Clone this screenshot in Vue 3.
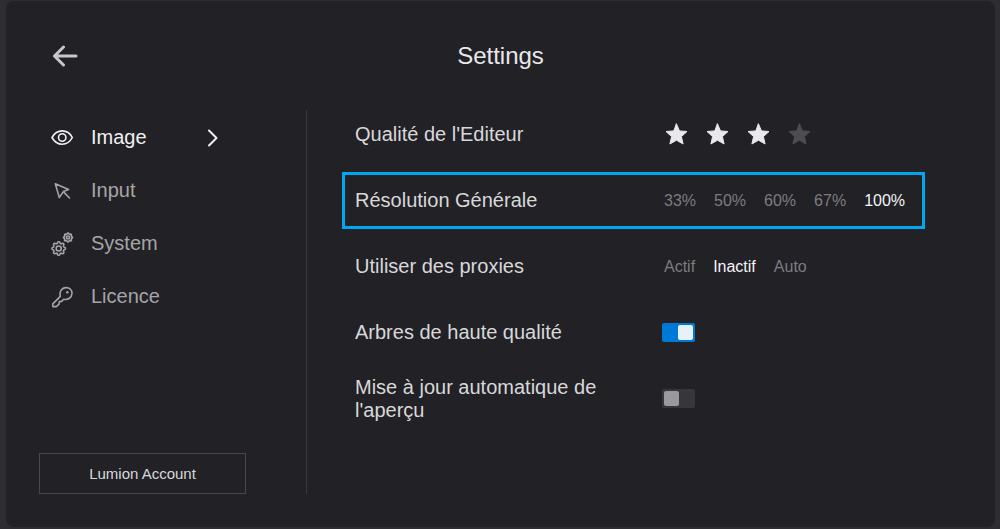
<script setup>
import { ref } from 'vue'

const sections = ['Image', 'Input', 'System', 'Licence']
const section = ref('Image')
const quality = ref(3)
const resolution = ref('100%')
const proxies = ref('Inactif')
const trees = ref(true)
const preview = ref(false)
const resolutions = ['33%', '50%', '60%', '67%', '100%']
const proxyModes = ['Actif', 'Inactif', 'Auto']

// Scalloped outline of a cog with eight rounded teeth.
function cog(cx, cy, r, depth) {
  const points = []
  for (let i = 0; i < 64; i++) {
    const a = (i / 64) * Math.PI * 2
    const d = r + depth * Math.tanh(2 * Math.cos(a * 8))
    points.push(`${(cx + d * Math.cos(a)).toFixed(2)} ${(cy + d * Math.sin(a)).toFixed(2)}`)
  }
  return `M${points.join('L')}Z`
}
const bigCog = cog(8.7, 16.5, 6, 0.8)
const smallCog = cog(18, 5.5, 4, 0.5)
</script>

<template>
  <main class="panel">
    <header class="header">
      <button class="back" type="button" aria-label="Back">
        <svg width="26" height="22" viewBox="0 0 26 22"><path d="M11.500 2 2.500 11l9 9M2.500 11h21.500" /></svg>
      </button>
      <h1>Settings</h1>
    </header>

    <div class="body">
      <aside class="sidebar">
        <nav>
          <button
            v-for="name in sections"
            :key="name"
            type="button"
            class="nav-item"
            :class="{ active: section === name }"
            @click="section = name"
          >
            <svg v-if="name === 'Image'" class="icon" width="24" height="24" viewBox="0 0 24 24">
              <path d="M2 11.500C4.500 7 8 4.900 12.200 4.900S20 7 22.300 11.500C20 16 16.500 18.200 12.200 18.200S4.500 16 2 11.500Z" />
              <circle cx="12.200" cy="11.500" r="3.700" />
            </svg>
            <svg v-else-if="name === 'Input'" class="icon" width="24" height="24" viewBox="0 0 24 24">
              <path d="M19.500 19 13.300 12.600 18.600 10.400 5.300 4.800 9.300 18.600 13.300 12.600" />
            </svg>
            <svg v-else-if="name === 'System'" class="icon" width="24" height="24" viewBox="0 0 24 24">
              <path :d="bigCog" />
              <circle cx="8.700" cy="16.500" r="2.500" />
              <path :d="smallCog" />
              <circle cx="18" cy="5.500" r="1.500" />
            </svg>
            <svg v-else class="icon" width="24" height="24" viewBox="0 0 24 24">
              <path d="M10.300 11.400C8.800 6.800 11.700 2.800 15.700 2.600 19.800 2.400 22.300 5.200 22 8.500 21.700 12.500 18.100 15.300 13.800 14.200L11.600 16.400 9.300 16.600 9 19.200 6.300 21.600H2.800V18.900Z" />
              <circle cx="17.300" cy="7.200" r="1.200" class="dot" />
            </svg>
            <span>{{ name }}</span>
            <svg v-if="section === name" class="chevron" width="12" height="18" viewBox="0 0 12 18">
              <path d="m3 1.500 7.500 7.500L3 16.500" />
            </svg>
          </button>
        </nav>
        <button class="account" type="button">Lumion Account</button>
      </aside>

      <section class="settings">
        <div class="row" role="radiogroup" aria-labelledby="quality-label">
          <span id="quality-label" class="label">Qualité de l'Editeur</span>
          <div class="stars">
            <label v-for="n in 4" :key="n" class="star" :class="{ on: n <= quality }">
              <input v-model="quality" type="radio" name="quality" :value="n" :aria-label="String(n)" />
              <svg width="23" height="22" viewBox="0 0 23 22">
                <path d="M11.500 1 14.500 7.900 22 8.500 16.400 13.600 18.100 21 11.500 17.200 4.900 21 6.600 13.600 1 8.500 8.500 7.900Z" />
              </svg>
            </label>
          </div>
        </div>

        <div class="row highlighted" role="radiogroup" aria-labelledby="resolution-label">
          <span id="resolution-label" class="label">Résolution Générale</span>
          <div class="options">
            <label v-for="r in resolutions" :key="r" :class="{ on: resolution === r }">
              <input v-model="resolution" type="radio" name="resolution" :value="r" />{{ r }}
            </label>
          </div>
        </div>

        <div class="row" role="radiogroup" aria-labelledby="proxies-label">
          <span id="proxies-label" class="label">Utiliser des proxies</span>
          <div class="options">
            <label v-for="p in proxyModes" :key="p" :class="{ on: proxies === p }">
              <input v-model="proxies" type="radio" name="proxies" :value="p" />{{ p }}
            </label>
          </div>
        </div>

        <div class="row">
          <label class="label" for="trees">Arbres de haute qualité</label>
          <input id="trees" v-model="trees" class="toggle" type="checkbox" />
        </div>

        <div class="row">
          <label class="label" for="preview">Mise à jour automatique de l'aperçu</label>
          <input id="preview" v-model="preview" class="toggle" type="checkbox" />
        </div>
      </section>
    </div>
  </main>
</template>

<style>
body {
  background: #2d2d32;
}
</style>

<style scoped>
* {
  box-sizing: border-box;
}
.panel {
  display: flex;
  flex-direction: column;
  min-height: calc(100vh - 2px);
  margin: 0 5px 0 6px;
  border-radius: 8px;
  background: #222126;
  color: #d8d8da;
  font-family: "Liberation Sans", Arial, sans-serif;
  font-size: 20px;
  line-height: 23px;
  border-top: 1px solid #2d2d32;
}
button {
  font: inherit;
  color: inherit;
  background: none;
  border: 0;
  padding: 0;
  cursor: pointer;
}
svg {
  display: block;
  fill: none;
  stroke: currentColor;
  stroke-linecap: round;
  stroke-linejoin: round;
}
.header {
  display: grid;
  grid-template-columns: 1fr auto 1fr;
  align-items: center;
  height: 109px;
  padding: 0 46px;
}
.back {
  justify-self: start;
  color: #c8c8cc;
  stroke-width: 3px;
}
h1 {
  margin: 0;
  font-size: 24px;
  font-weight: 400;
  line-height: 28px;
  color: #e8e8ea;
}
.body {
  flex: 1;
  display: flex;
  padding-bottom: 33px;
}
.sidebar {
  display: flex;
  flex-direction: column;
  justify-content: space-between;
  width: 301px;
  padding: 0 60px 0 33px;
  border-right: 1px solid #38383d;
}
.nav-item {
  display: flex;
  align-items: center;
  width: 100%;
  height: 53px;
  padding: 0 28px 0 11px;
  color: #a5a5a9;
}
.nav-item.active {
  color: #f0f0f2;
}
nav {
  padding-top: 1px;
}
.icon {
  margin-right: 17px;
  stroke-width: 1.6px;
}
.dot {
  fill: currentColor;
  stroke: none;
}
.chevron {
  margin-left: auto;
  stroke-width: 2px;
}
.account {
  height: 41px;
  border: 1px solid #48484c;
  font-size: 15px;
}
.settings {
  flex: 1;
  display: flex;
  flex-direction: column;
  gap: 9px;
  margin-top: -4px;
  padding: 0 70px 0 35px;
}
.row {
  display: flex;
  align-items: center;
  height: 57px;
  padding-left: 10px;
  border: 3px solid transparent;
}
.row.highlighted {
  border-color: #00a8f3;
}
.label {
  width: 250px;
  margin-right: 57px;
}
.options {
  display: flex;
  gap: 18px;
  margin-left: 2px;
  font-size: 16px;
  color: #7c7c80;
}
.options .on {
  color: #f4f4f6;
}
label {
  position: relative;
  cursor: pointer;
}
label input {
  position: absolute;
  inset: 0;
  margin: 0;
  opacity: 0;
}
.stars {
  display: flex;
  gap: 18px;
  margin-left: 3px;
  padding-bottom: 2px;
}
.star {
  color: #4c4c51;
}
.star.on {
  color: #e9e8ed;
}
.star svg {
  fill: currentColor;
}
.toggle {
  appearance: none;
  display: flex;
  align-items: center;
  width: 33px;
  height: 19px;
  margin: 0;
  padding: 0 2px;
  border-radius: 2px;
  background: #37373a;
  cursor: pointer;
}
.toggle::before {
  content: "";
  width: 15px;
  height: 15px;
  border-radius: 2px;
  background: #9a999e;
}
.toggle:checked {
  justify-content: flex-end;
  background: #0078d7;
}
.toggle:checked::before {
  background: #e5f1fb;
}
</style>
